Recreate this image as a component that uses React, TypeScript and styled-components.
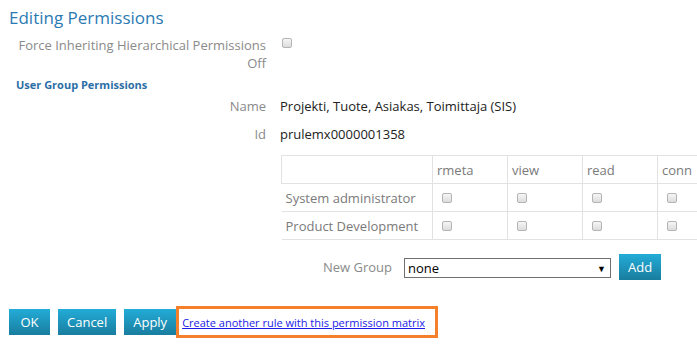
import React from "react";
import styled, { createGlobalStyle } from "styled-components";

const GlobalStyle = createGlobalStyle`
  body {
    margin: 0;
    background: #fff;
    font-family: "Open Sans", "Liberation Sans", sans-serif;
    overflow: hidden;
  }
`;

const Page = styled.div`
  width: 697px;
  height: 346px;
  overflow: hidden;
  padding: 6px 0 0 9px;
  box-sizing: border-box;
`;

const Title = styled.h2`
  margin: 0;
  font-size: 17px;
  font-weight: 400;
  color: #2a7ab3;
  line-height: 24px;
`;

const FormGrid = styled.div`
  display: grid;
  grid-template-columns: 257px 1fr;
  column-gap: 14px;
  align-items: start;
`;

const Label = styled.div`
  text-align: right;
  font-size: 13px;
  line-height: 18px;
  color: #8a8a8a;
  padding: ${(p: { $pad?: string }) => p.$pad || "5px 0"};
`;

const Value = styled.div`
  font-size: 13px;
  line-height: 18px;
  color: #222;
  padding: 5px 0;
`;

const Section = styled.div`
  font-size: 11px;
  font-weight: 700;
  color: #2a6ea6;
  padding: 5px 0 0 7px;
`;

const Check = styled.input.attrs({ type: "checkbox" })`
  appearance: none;
  width: 10px;
  height: 10px;
  margin: ${(p: { $m?: string }) => p.$m || "4px 0 0 2px"};
  border: 1px solid #b4b4b4;
  border-radius: 2px;
  background: linear-gradient(#f6f6f6, #dcdcdc);
  display: block;
`;

const Matrix = styled.table`
  border-collapse: collapse;
  margin: 7px 0 0 1px;
  width: 451px;
  min-width: 451px;
  font-size: 13px;
  color: #7a7a7a;
  table-layout: fixed;
`;

const Cell = styled.td`
  border: 1px solid #e2e2e2;
  height: 27px;
  padding: 0 4px;
  width: ${(p: { $w?: number }) => (p.$w ? `${p.$w}px` : "66px")};
  vertical-align: middle;
  white-space: nowrap;
  overflow: hidden;
`;

const NameCell = styled(Cell)`
  border-left: none;
`;

const AddRow = styled.div`
  display: flex;
  align-items: center;
  margin: 14px 0 0 0;
`;

const AddLabel = styled.span`
  width: 112px;
  text-align: right;
  font-size: 13px;
  color: #8a8a8a;
  margin-right: 12px;
`;

const Select = styled.div`
  width: 198px;
  height: 18px;
  border: 1px solid #707070;
  display: flex;
  align-items: center;
  justify-content: space-between;
  padding: 0 4px 0 3px;
  font-size: 13px;
  color: #000;
  margin-right: 8px;
  margin-top: 2px;
  box-sizing: content-box;
`;

const Arrow = styled.span`
  font-size: 9px;
`;

const Button = styled.button`
  font-family: inherit;
  font-size: 13px;
  color: #fff;
  height: 26px;
  min-width: 41px;
  padding: 0 9px;
  border: none;
  border-radius: 0;
  background: linear-gradient(#23acd8, #197d9e);
`;

const Footer = styled.div`
  display: flex;
  align-items: center;
  gap: 8px;
  margin-top: 26px;
`;

const Highlight = styled.div`
  border: 3px solid #f5802b;
  height: 26px;
  padding: 0 10px 0 3px;
  margin-left: -8px;
  display: flex;
  align-items: center;
`;

const Link = styled.a`
  font-size: 11px;
  color: #1a1ae6;
  text-decoration: underline;
`;

const cols = ["rmeta", "view", "read", "conn"];
const groups = ["System administrator", "Product Development"];

export default function App() {
  return (
    <Page>
      <GlobalStyle />
      <Title>Editing Permissions</Title>
      <FormGrid>
        <Label $pad="6px 0 0">
          Force Inheriting Hierarchical Permissions
          <br />
          Off
        </Label>
        <Value>
          <Check $m="3px 0 0 2px" />
        </Value>
      </FormGrid>
      <Section>User Group Permissions</Section>
      <FormGrid>
        <Label>Name</Label>
        <Value>Projekti, Tuote, Asiakas, Toimittaja (SIS)</Value>
        <Label>Id</Label>
        <Value>prulemx0000001358</Value>
        <div />
        <div>
          <Matrix>
            <tbody>
              <tr>
                <Cell $w={142} />
                {cols.map((c) => (
                  <Cell key={c}>{c}</Cell>
                ))}
              </tr>
              {groups.map((g) => (
                <tr key={g}>
                  <NameCell $w={142}>{g}</NameCell>
                  {cols.map((c) => (
                    <Cell key={c}>
                      <Check $m="0 0 0 5px" />
                    </Cell>
                  ))}
                </tr>
              ))}
            </tbody>
          </Matrix>
          <AddRow>
            <AddLabel>New Group</AddLabel>
            <Select>
              <span>none</span>
              <Arrow>▼</Arrow>
            </Select>
            <Button>Add</Button>
          </AddRow>
        </div>
      </FormGrid>
      <Footer>
        <Button>OK</Button>
        <Button>Cancel</Button>
        <Button>Apply</Button>
        <Highlight>
          <Link href="#">Create another rule with this permission matrix</Link>
        </Highlight>
      </Footer>
    </Page>
  );
}
